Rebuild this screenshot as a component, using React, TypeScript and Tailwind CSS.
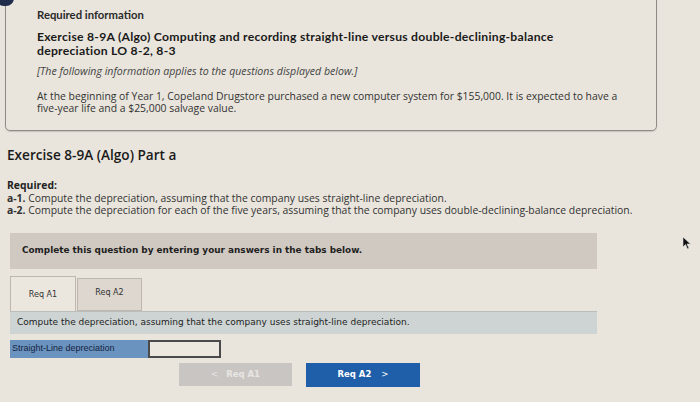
import React from "react";

/**
 * Exercise page: required info box, part header, tabs and answer row.
 */
const App = () => {
  return (
    <div className="relative w-[700px] h-[402px] overflow-hidden bg-[#e9e5dc] font-['Open_Sans','Lato',sans-serif] text-[#1d1d1d]">
      {/* dark blue badge peeking in at the top-left corner */}
      <div className="absolute left-[-4px] top-[-10px] w-[18px] h-[16px] rounded-full bg-[#1f2d4a]" />

      {/* Required information box */}
      <div className="ml-[5px] mt-[-10px] w-[652px] h-[141px] rounded-b-[5px] border border-[#8e8c87] pl-[31px] pt-[17px] shadow-[0_1px_1px_rgba(0,0,0,0.15)]">
        <div className="font-['Lato',sans-serif] text-[11.3px] leading-[14px] font-bold text-[#2a2a2a]">Required information</div>
        <div className="mt-[8px] font-['Lato',sans-serif] text-[12.2px] leading-[13.5px] tracking-[0.25px] font-bold text-[#1a1a1a]">
          <div>Exercise 8-9A (Algo) Computing and recording straight-line versus double-declining-balance</div>
          <div>depreciation LO 8-2, 8-3</div>
        </div>
        <div className="mt-[7.5px] text-[10.6px] leading-[13px] italic text-[#444]">
          [The following information applies to the questions displayed below.]
        </div>
        <div className="mt-[12px] text-[10.4px] leading-[12.5px] text-[#333]">
          <div>At the beginning of Year 1, Copeland Drugstore purchased a new computer system for $155,000. It is expected to have a</div>
          <div>five-year life and a $25,000 salvage value.</div>
        </div>
      </div>

      {/* Part header */}
      <div className="pl-[7px] mt-[15px] text-[13.6px] leading-[17px] font-semibold text-[#1a1a1a]">
        Exercise 8-9A (Algo) Part a
      </div>

      <div className="pl-[7px] mt-[16px] text-[10.4px] leading-[12.5px] text-[#333]">
        <div className="font-bold text-[#222]">Required:</div>
        <div>
          <span className="font-bold">a-1.</span> Compute the depreciation, assuming that the company uses straight-line depreciation.
        </div>
        <div>
          <span className="font-bold">a-2.</span> Compute the depreciation for each of the five years, assuming that the company uses double-declining-balance depreciation.
        </div>
      </div>

      {/* Instruction banner */}
      <div className="ml-[10px] mt-[16px] w-[587px] h-[36px] bg-[#cfc9c1] flex items-center pl-[12px]">
        <span className="font-['DejaVu_Sans',sans-serif] text-[8.9px] font-bold text-[#1e1e1e]">
          Complete this question by entering your answers in the tabs below.
        </span>
      </div>

      {/* Tabs */}
      <div className="ml-[10px] mt-[7px] flex items-end gap-[1px] font-['DejaVu_Sans',sans-serif] text-[8px] text-[#333]">
        <div className="w-[66px] h-[35px] bg-[#ebe6de] border border-b-0 border-[#bdb7ae] flex items-center justify-center pt-[3px]">Req A1</div>
        <div className="w-[65px] h-[33px] bg-[#ddd7cf] border border-[#bdb7ae] flex items-center justify-center pb-[2px]">Req A2</div>
      </div>

      <div className="ml-[10px] w-[587px] h-[23px] bg-[#cdd4d3] border-t border-[#b9bebd] flex items-center pl-[7px] pt-[1px]">
        <span className="font-['DejaVu_Sans',sans-serif] text-[9px] text-[#1e1e1e]">
          Compute the depreciation, assuming that the company uses straight-line depreciation.
        </span>
      </div>

      {/* Answer row */}
      <div className="ml-[10px] mt-[6px] flex h-[18px]">
        <div className="w-[138px] bg-[#6b93c0] flex items-center pl-[2px] text-[9px] text-[#14233f] font-['Liberation_Sans',sans-serif]">
          Straight-Line depreciation
        </div>
        <div className="w-[73px] bg-[#ece8e0] border-2 border-[#4a4a4a]" />
      </div>

      {/* Navigation buttons */}
      <div className="mt-[5px] ml-[179px] flex gap-[14px] font-['DejaVu_Sans',sans-serif] text-[8.5px] font-bold">
        <div className="w-[113px] h-[23px] bg-[#c8c5c2] flex items-center justify-center gap-[8px] text-[#e8e6e3]">
          <span className="font-normal">&lt;</span>
          <span>Req A1</span>
        </div>
        <div className="w-[114px] h-[24px] bg-[#1f5ea8] flex items-center justify-center gap-[10px] text-white">
          <span>Req A2</span>
          <span className="font-normal">&gt;</span>
        </div>
      </div>

      {/* mouse pointer */}
      <svg className="absolute left-[682px] top-[236px]" width="10" height="14" viewBox="0 0 10 14">
        <path d="M1 1 L1 11 L3.5 8.5 L5.5 13 L7 12.3 L5 8 L8.5 8 Z" fill="#111" stroke="#ddd" strokeWidth="0.6" />
      </svg>
    </div>
  );
};

export default App;
